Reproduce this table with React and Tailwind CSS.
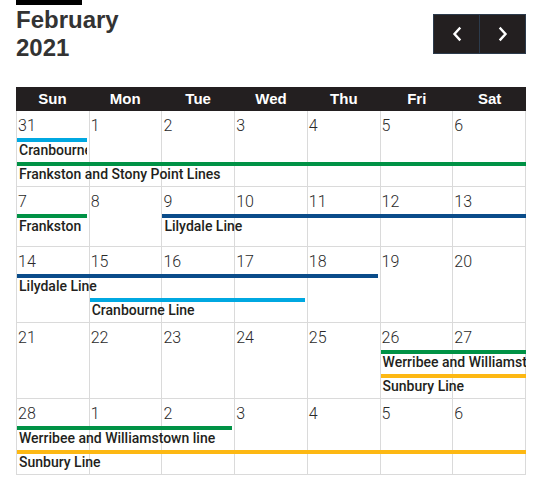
// Month calendar — line works schedule, February 2021.
const COL_START = ["", "col-start-1", "col-start-2", "col-start-3", "col-start-4", "col-start-5", "col-start-6", "col-start-7"];
const COL_SPAN = ["", "col-span-1", "col-span-2", "col-span-3", "col-span-4", "col-span-5", "col-span-6", "col-span-7"];
const SLOT_ROW = ["", "row-start-2", "row-start-3"];

const LINE = {
  cyan: "bg-[#00a8e1]",
  green: "bg-[#009245]",
  blue: "bg-[#0a4c8a]",
  yellow: "bg-[#fdb813]",
};

const weeks = [
  {
    days: [31, 1, 2, 3, 4, 5, 6],
    rows: "grid-rows-[27px_24px_24px]",
    events: [
      { title: "Cranbourne Line", start: 1, span: 1, slot: 1, color: "cyan", ends: true },
      { title: "Frankston and Stony Point Lines", start: 1, span: 7, slot: 2, color: "green" },
    ],
  },
  {
    days: [7, 8, 9, 10, 11, 12, 13],
    rows: "grid-rows-[27px_24px_8px]",
    events: [
      { title: "Frankston", start: 1, span: 1, slot: 1, color: "green", ends: true },
      { title: "Lilydale Line", start: 3, span: 5, slot: 1, color: "blue" },
    ],
  },
  {
    days: [14, 15, 16, 17, 18, 19, 20],
    rows: "grid-rows-[27px_24px_24px]",
    events: [
      { title: "Lilydale Line", start: 1, span: 5, slot: 1, color: "blue", ends: true },
      { title: "Cranbourne Line", start: 2, span: 3, slot: 2, color: "cyan", ends: true },
    ],
  },
  {
    days: [21, 22, 23, 24, 25, 26, 27],
    rows: "grid-rows-[27px_24px_24px]",
    events: [
      { title: "Werribee and Williamstown line", start: 6, span: 2, slot: 1, color: "green" },
      { title: "Sunbury Line", start: 6, span: 2, slot: 2, color: "yellow" },
    ],
  },
  {
    days: [28, 1, 2, 3, 4, 5, 6],
    rows: "grid-rows-[27px_24px_24px]",
    events: [
      { title: "Werribee and Williamstown line", start: 1, span: 3, slot: 1, color: "green", ends: true },
      { title: "Sunbury Line", start: 1, span: 7, slot: 2, color: "yellow" },
    ],
  },
];

const DAY_NAMES = ["Sun", "Mon", "Tue", "Wed", "Thu", "Fri", "Sat"];

export default function App() {
  return (
    <main className="min-h-screen bg-white pl-4 pr-[10px] font-['Roboto',sans-serif]">
      <div className="flex items-start justify-between">
        <div>
          <div className="h-[5px] w-[66px] bg-black" />
          <h2 className="mt-px font-['Liberation_Sans',Arial,sans-serif] text-[24px] font-bold leading-[28px] text-[#333]">
            February
            <br />
            2021
          </h2>
        </div>
        <div className="mt-[14px] flex border border-[#2c3b4c] bg-[#231f20]">
          <NavButton dir="prev" />
          <div className="w-px bg-[#2c3b4c]" />
          <NavButton dir="next" />
        </div>
      </div>

      <div className="mt-[25px]">
        <div className="grid h-[24px] grid-cols-7 items-center bg-[#231f20] font-['Liberation_Sans',Arial,sans-serif] text-[15px] font-bold text-white">
          {DAY_NAMES.map((d) => (
            <div key={d} className="text-center">{d}</div>
          ))}
        </div>
        {weeks.map((w, i) => (
          <Week key={i} week={w} />
        ))}
      </div>
    </main>
  );
}

function Week({ week }) {
  return (
    <div className={`grid grid-cols-7 border-b border-l border-[#dadada] ${week.rows}`}>
      {week.days.map((d, i) => (
        <div key={i} className={`row-span-full row-start-1 border-r border-[#dadada] ${COL_START[i + 1]}`}>
          <div className="pl-px pt-[5px] text-[16px] font-light leading-5 text-[#2a2a2a]">{d}</div>
        </div>
      ))}
      {week.events.map((e, i) => (
        <div
          key={i}
          className={`min-w-0 overflow-hidden whitespace-nowrap ${COL_START[e.start]} ${COL_SPAN[e.span]} ${SLOT_ROW[e.slot]} ${e.ends ? "mr-[3px]" : ""}`}
        >
          <div className={`h-[4px] ${LINE[e.color]}`} />
          <div className="pl-[2px] text-[14px] font-medium leading-4 text-[#231f20]">{e.title}</div>
        </div>
      ))}
    </div>
  );
}

function NavButton({ dir }) {
  return (
    <button className="flex h-[38px] w-[45px] items-center justify-center">
      <svg width="12" height="16" viewBox="0 0 12 16" fill="none" stroke="white" strokeWidth="2.4" strokeLinecap="square">
        {dir === "prev" ? <polyline points="8.5,2.5 3.5,8 8.5,13.5" /> : <polyline points="3.5,2.5 8.5,8 3.5,13.5" />}
      </svg>
    </button>
  );
}
